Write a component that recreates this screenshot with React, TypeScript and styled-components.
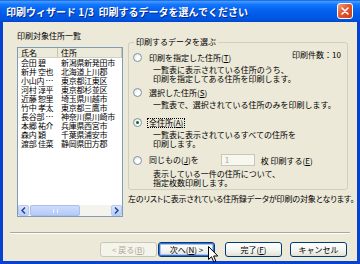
import React from "react";
import styled, { createGlobalStyle, css } from "styled-components";

const Global = createGlobalStyle`
  html, body { margin: 0; padding: 0; background: #ffffff; }
  body { font-family: "Noto Sans CJK JP", "Noto Sans", sans-serif; font-size: 8px; color: #000; }
  * { box-sizing: border-box; }
`;

const Window = styled.div`
  width: 360px;
  height: 264px;
  display: flex;
  flex-direction: column;
  background: #0842d3;
  overflow: hidden;
`;

const TitleBar = styled.div`
  height: 22px;
  flex: none;
  display: flex;
  align-items: center;
  justify-content: space-between;
  padding: 0 7px 0 6px;
  background: linear-gradient(
    to bottom,
    #0a5ed8 0%,
    #4599ff 7%,
    #1478ff 20%,
    #0566f2 40%,
    #005be8 65%,
    #0056e2 85%,
    #0048cf 100%
  );
`;

const TitleText = styled.span`
  color: #fff;
  font-weight: bold;
  font-size: 10px;
  line-height: 13px;
  text-shadow: 1px 1px 0 #0a2a88;
  white-space: pre;
`;

const CloseButton = styled.div`
  width: 16px;
  height: 16px;
  border: 1px solid #fff;
  border-radius: 3px;
  background: linear-gradient(135deg, #f0a080 0%, #e2582f 45%, #c8401a 100%);
  display: flex;
  align-items: center;
  justify-content: center;
`;

const Body = styled.div`
  flex: 1;
  margin: 0 3px 3px 3px;
  background: #ece9d8;
  display: flex;
  flex-direction: column;
  position: relative;
`;

const Main = styled.div`
  display: flex;
  padding: 8px 0 0 14px;
`;

const LeftCol = styled.div`
  width: 106px;
  display: flex;
  flex-direction: column;
`;

const Label = styled.div`
  height: 11px;
  line-height: 11px;
  margin-bottom: 6px;
  white-space: nowrap;
`;

const ListBox = styled.div`
  height: 170px;
  border: 1px solid #7f9db9;
  background: #fff;
  display: flex;
  flex-direction: column;
  overflow: hidden;
`;

const HeaderRow = styled.div`
  height: 10px;
  flex: none;
  display: flex;
  background: #ebeadb;
  border-bottom: 1px solid #d6d2c2;
`;

const HeaderCell = styled.div<{ $w?: number }>`
  ${(p) => (p.$w ? css`width: ${p.$w}px; flex: none;` : css`flex: 1;`)}
  line-height: 9px;
  padding-left: 3px;
  white-space: nowrap;
  overflow: hidden;
  border-right: 1px solid #c7c5b2;
`;

const Rows = styled.div`
  flex: 1;
  overflow: hidden;
`;

const Row = styled.div`
  display: flex;
  height: 9px;
  line-height: 9px;
  white-space: nowrap;
`;

const Cell = styled.div<{ $w?: number }>`
  ${(p) => (p.$w ? css`width: ${p.$w}px; flex: none; text-overflow: ellipsis;` : css`flex: 1;`)}
  padding-left: 3px;
  overflow: hidden;
  white-space: nowrap;
  letter-spacing: -0.3px;
`;

const HScroll = styled.div`
  height: 11px;
  flex: none;
  display: flex;
  background: #f4f3ee;
`;

const ScrollBtn = styled.div`
  width: 11px;
  height: 11px;
  flex: none;
  border: 1px solid #b5c9f3;
  border-radius: 2px;
  background: linear-gradient(to bottom, #dbe6fd, #b8cdf8);
  display: flex;
  align-items: center;
  justify-content: center;
`;

const Track = styled.div`
  flex: 1;
  display: flex;
  align-items: stretch;
`;

const Thumb = styled.div`
  width: 50px;
  margin-left: 1px;
  border: 1px solid #a8bff0;
  border-radius: 2px;
  background: linear-gradient(to bottom, #cddcfb, #b6cbf7);
  display: flex;
  align-items: center;
  justify-content: center;
`;

const Grip = styled.div`
  width: 5px;
  height: 4px;
  border-left: 1px solid #eef3fe;
  border-right: 1px solid #eef3fe;
`;

const RightCol = styled.div`
  margin-left: 5px;
  width: 220px;
  display: flex;
  flex-direction: column;
  padding-top: 12px;
`;

const GroupBox = styled.div`
  position: relative;
  height: 148px;
  border: 1px solid #d0d0bf;
  border-radius: 3px;
  padding: 10px 6px 0 4px;
  display: flex;
  flex-direction: column;
`;

const GroupTitle = styled.span`
  position: absolute;
  top: -6px;
  left: 5px;
  padding: 0 2px;
  line-height: 10px;
  background: #ece9d8;
  white-space: nowrap;
`;

const OptionRow = styled.div<{ $mt: number; $h?: number }>`
  display: flex;
  align-items: center;
  margin-top: ${(p) => p.$mt}px;
  height: ${(p) => p.$h ?? 9}px;
  line-height: 9px;
  white-space: nowrap;
`;

const Radio = styled.span<{ $checked?: boolean }>`
  width: 9px;
  height: 9px;
  flex: none;
  border-radius: 50%;
  border: 1px solid #7c93ad;
  background: radial-gradient(circle at 65% 65%, #ffffff 30%, #dcdad2 100%);
  display: flex;
  align-items: center;
  justify-content: center;
  margin-right: 5px;
  &::after {
    content: "";
    width: 3px;
    height: 3px;
    border-radius: 50%;
    background: ${(p) => (p.$checked ? "#1d5e1d" : "transparent")};
  }
`;

const OptionLabel = styled.span<{ $focus?: boolean }>`
  padding: 0 1px;
  border: 1px ${(p) => (p.$focus ? "dotted #000" : "solid transparent")};
  line-height: 8px;
`;

const Count = styled.span`
  margin-left: auto;
  margin-top: -6px;
  white-space: nowrap;
`;

const Desc = styled.div<{ $mt: number }>`
  margin-top: ${(p) => p.$mt}px;
  padding-left: 20px;
  line-height: 9px;
  white-space: nowrap;
`;

const SmallInput = styled.div`
  width: 34px;
  height: 12px;
  margin: 0 6px 0 20px;
  border: 1px solid #c9c7ba;
  background: #f7f6ef;
  color: #aca899;
  line-height: 10px;
  padding-left: 3px;
`;

const Note = styled.div`
  margin-top: 4px;
  line-height: 9px;
  white-space: nowrap;
  font-feature-settings: "palt";
  letter-spacing: -0.1px;
`;

const Separator = styled.div`
  margin: 15px 7px 0 7px;
  height: 2px;
  border-top: 1px solid #aca899;
  border-bottom: 1px solid #ffffff;
`;

const ButtonRow = styled.div`
  display: flex;
  justify-content: flex-end;
  padding: 8px 10px 0 0;
`;

const Button = styled.div<{ $disabled?: boolean; $default?: boolean; $ml: number }>`
  width: 57px;
  height: 15px;
  margin-left: ${(p) => p.$ml}px;
  border-radius: 3px;
  border: 1px solid ${(p) => (p.$disabled ? "#c9c7ba" : "#003c74")};
  background: ${(p) =>
    p.$disabled ? "#f5f4ea" : "linear-gradient(to bottom, #ffffff 0%, #f3f3ef 60%, #e2e0d6 100%)"};
  color: ${(p) => (p.$disabled ? "#aca899" : "#000")};
  box-shadow: ${(p) => (p.$default ? "inset 0 0 0 1px #3c6ecb, inset 0 0 0 2px #a9c4f5" : "none")};
  display: flex;
  align-items: center;
  justify-content: center;
  line-height: 9px;
  white-space: pre;
`;

const Cursor = styled.svg`
  position: absolute;
  left: 205px;
  top: 224px;
  pointer-events: none;
`;

const people: [string, string][] = [
  ["会田 碧", "新潟県新発田市"],
  ["新井 空也", "北海道上川郡"],
  ["小山内 朝日", "東京都江東区"],
  ["河村 淳平", "東京都杉並区"],
  ["近藤 恕里", "埼玉県川越市"],
  ["竹中 孝太", "東京都三鷹市"],
  ["長谷部 尚吾", "神奈川県川崎市"],
  ["本郷 祐介", "兵庫県西宮市"],
  ["森内 穎", "千葉県浦安市"],
  ["渡部 佳菜", "静岡県田方郡"],
];

export default function App() {
  return (
    <>
      <Global />
      <Window>
        <TitleBar>
          <TitleText>印刷ウィザード 1/3  印刷するデータを選んでください</TitleText>
          <CloseButton>
            <svg width="8" height="8" viewBox="0 0 8 8">
              <path d="M1 1 L7 7 M7 1 L1 7" stroke="#fff" strokeWidth="1.6" strokeLinecap="round" />
            </svg>
          </CloseButton>
        </TitleBar>
        <Body>
          <Main>
            <LeftCol>
              <Label>印刷対象住所一覧</Label>
              <ListBox>
                <HeaderRow>
                  <HeaderCell $w={40}>氏名</HeaderCell>
                  <HeaderCell>住所</HeaderCell>
                </HeaderRow>
                <Rows>
                  {people.map(([n, a]) => (
                    <Row key={n}>
                      <Cell $w={40}>{n}</Cell>
                      <Cell>{a}</Cell>
                    </Row>
                  ))}
                </Rows>
                <HScroll>
                  <ScrollBtn>
                    <svg width="5" height="7" viewBox="0 0 5 7">
                      <path d="M4 0.5 L1 3.5 L4 6.5" stroke="#24448e" strokeWidth="1.5" fill="none" />
                    </svg>
                  </ScrollBtn>
                  <Track>
                    <Thumb>
                      <Grip />
                    </Thumb>
                  </Track>
                  <ScrollBtn>
                    <svg width="5" height="7" viewBox="0 0 5 7">
                      <path d="M1 0.5 L4 3.5 L1 6.5" stroke="#24448e" strokeWidth="1.5" fill="none" />
                    </svg>
                  </ScrollBtn>
                </HScroll>
              </ListBox>
            </LeftCol>
            <RightCol>
              <GroupBox>
                <GroupTitle>印刷するデータを選ぶ</GroupTitle>
                <OptionRow $mt={0}>
                  <Radio />
                  <OptionLabel>
                    印刷を指定した住所(<u>T</u>)
                  </OptionLabel>
                  <Count>印刷件数：10</Count>
                </OptionRow>
                <Desc $mt={3}>
                  一覧表に表示されている住所のうち、
                  <br />
                  印刷を指定してある住所を印刷します。
                </Desc>
                <OptionRow $mt={5}>
                  <Radio />
                  <OptionLabel>
                    選択した住所(<u>S</u>)
                  </OptionLabel>
                </OptionRow>
                <Desc $mt={3}>一覧表で、選択されている住所のみを印刷します。</Desc>
                <OptionRow $mt={9}>
                  <Radio $checked />
                  <OptionLabel $focus>
                    全住所(<u>A</u>)
                  </OptionLabel>
                </OptionRow>
                <Desc $mt={3}>
                  一覧表に表示されているすべての住所を
                  <br />
                  印刷します。
                </Desc>
                <OptionRow $mt={6} $h={12}>
                  <Radio />
                  <OptionLabel>
                    同じもの(<u>J</u>)を
                  </OptionLabel>
                  <SmallInput>1</SmallInput>
                  <span>
                    枚 印刷する(<u>E</u>)
                  </span>
                </OptionRow>
                <Desc $mt={3}>
                  表示している一件の住所について、
                  <br />
                  指定枚数印刷します。
                </Desc>
              </GroupBox>
              <Note>左のリストに表示されている住所録データが印刷の対象となります。</Note>
            </RightCol>
          </Main>
          <Separator />
          <ButtonRow>
            <Button $disabled $ml={0}>
              {"< 戻る("}
              <u>B</u>
              {")"}
            </Button>
            <Button $default $ml={1}>
              {"次へ("}
              <u>N</u>
              {") >"}
            </Button>
            <Button $ml={10}>
              {"完了("}
              <u>F</u>
              {")"}
            </Button>
            <Button $ml={8}>キャンセル</Button>
          </ButtonRow>
          <Cursor width="11" height="17" viewBox="0 0 11 17">
            <path
              d="M0.5 0.5 L0.5 13.5 L3.5 10.8 L5.8 16 L7.8 15.1 L5.6 10 L9.8 10 Z"
              fill="#fff"
              stroke="#000"
              strokeWidth="1"
              strokeLinejoin="miter"
            />
          </Cursor>
        </Body>
      </Window>
    </>
  );
}
